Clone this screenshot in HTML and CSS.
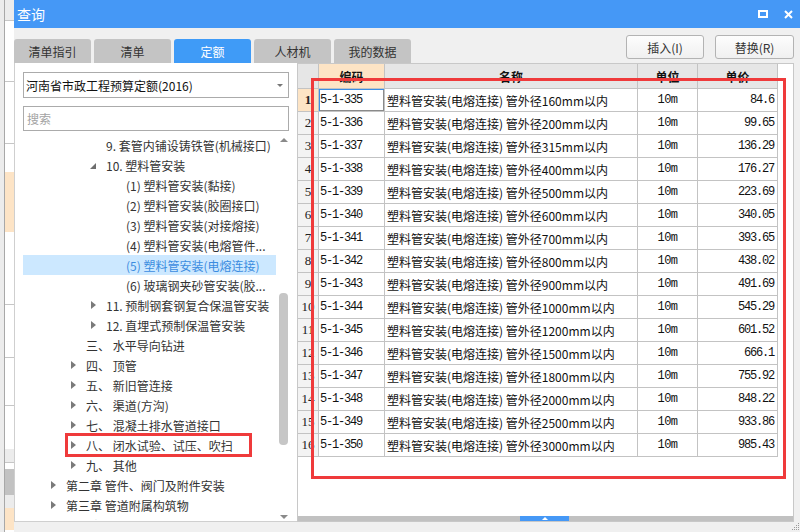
FILE: index.html
```html
<!DOCTYPE html>
<html lang="zh-CN">
<head>
<meta charset="utf-8">
<title>查询</title>
<link rel="stylesheet" href="styles.css">
</head>
<body>
<div class="screen">
  <div class="bgapp">
    <div class="bgapp-col">
      <div class="bg-cell h20 gray"></div>
      <div class="bg-cell h61"></div>
      <div class="bg-cell h62"></div>
      <div class="bg-plain h28"></div>
      <div class="bg-plain h60 orange"></div>
      <div class="bg-cell h73"></div>
      <div class="bg-cell h53"></div>
      <div class="bg-cell h48"></div>
      <div class="bg-plain h43"></div>
      <div class="bg-cell h14 gray"></div>
      <div class="bg-plain h6"></div>
      <div class="bg-plain h26 dark"></div>
      <div class="bg-plain h13 gray"></div>
      <div class="bg-plain h22 orange"></div>
    </div>
  </div>

  <div class="window">
    <div class="titlebar">
      <span class="title">查询</span>
      <div class="controls">
        <span class="max-icon"></span>
        <svg class="close-icon" width="9" height="9" viewBox="0 0 9 9"><path d="M1 1 L8 8 M8 1 L1 8" stroke="#fff" stroke-width="2" fill="none"/></svg>
      </div>
    </div>

    <div class="winbody">
      <div class="toprow">
        <div class="tabs">
          <div class="tab">清单指引</div>
          <div class="tab">清单</div>
          <div class="tab active">定额</div>
          <div class="tab">人材机</div>
          <div class="tab">我的数据</div>
        </div>
        <div class="buttons">
          <div class="btn">插入(I)</div>
          <div class="btn btn-wide">替换(R)</div>
        </div>
      </div>

      <div class="main">
        <div class="left">
          <div class="select">
            <span>河南省市政工程预算定额(2016)</span>
            <span class="caret"></span>
          </div>
          <div class="search">搜索</div>
          <div class="treewrap">
            <div class="tree">
              <div class="row l2"><span class="tw"></span><span>9. 套管内铺设铸铁管(机械接口)</span></div>
              <div class="row l2"><span class="tw"><span class="tri-open"></span></span><span>10. 塑料管安装</span></div>
              <div class="row l3"><span class="tw"></span><span>(1) 塑料管安装(黏接)</span></div>
              <div class="row l3"><span class="tw"></span><span>(2) 塑料管安装(胶圈接口)</span></div>
              <div class="row l3"><span class="tw"></span><span>(3) 塑料管安装(对接熔接)</span></div>
              <div class="row l3"><span class="tw"></span><span>(4) 塑料管安装(电熔管件...</span></div>
              <div class="row l3 selected"><span class="tw"></span><span>(5) 塑料管安装(电熔连接)</span></div>
              <div class="row l3"><span class="tw"></span><span>(6) 玻璃钢夹砂管安装(胶...</span></div>
              <div class="row l2"><span class="tw"><span class="tri"></span></span><span>11. 预制钢套钢复合保温管安装</span></div>
              <div class="row l2"><span class="tw"><span class="tri"></span></span><span>12. 直埋式预制保温管安装</span></div>
              <div class="row l1"><span class="tw"></span><span>三、 水平导向钻进</span></div>
              <div class="row l1"><span class="tw"><span class="tri"></span></span><span>四、 顶管</span></div>
              <div class="row l1"><span class="tw"><span class="tri"></span></span><span>五、 新旧管连接</span></div>
              <div class="row l1"><span class="tw"><span class="tri"></span></span><span>六、 渠道(方沟)</span></div>
              <div class="row l1"><span class="tw"><span class="tri"></span></span><span>七、 混凝土排水管道接口</span></div>
              <div class="row l1 marked"><span class="tw"><span class="tri"></span></span><span>八、 闭水试验、试压、吹扫</span><span class="redmark"></span></div>
              <div class="row l1"><span class="tw"><span class="tri"></span></span><span>九、 其他</span></div>
              <div class="row l0"><span class="tw"><span class="tri"></span></span><span>第二章 管件、阀门及附件安装</span></div>
              <div class="row l0"><span class="tw"><span class="tri"></span></span><span>第三章 管道附属构筑物</span></div>
              <div class="row l0"><span class="tw"><span class="tri"></span></span><span>第四章 措施项目</span></div>
            </div>
            <div class="vscroll">
              <div class="arrow-up"></div>
              <div class="thumb"></div>
              <div class="arrow-down"></div>
            </div>
          </div>
        </div>

        <div class="right">
          <div class="grid">
            <div class="hc"></div>
            <div class="hc hc-sel">编码</div>
            <div class="hc">名称</div>
            <div class="hc">单位</div>
            <div class="hc">单价</div>

            <div class="rn rn-sel">1</div><div class="c code cur">5-1-335</div><div class="c name">塑料管安装(电熔连接) 管外径160mm以内</div><div class="c unit">10m</div><div class="c price">84.6</div>
            <div class="rn">2</div><div class="c code">5-1-336</div><div class="c name">塑料管安装(电熔连接) 管外径200mm以内</div><div class="c unit">10m</div><div class="c price">99.65</div>
            <div class="rn">3</div><div class="c code">5-1-337</div><div class="c name">塑料管安装(电熔连接) 管外径315mm以内</div><div class="c unit">10m</div><div class="c price">136.29</div>
            <div class="rn">4</div><div class="c code">5-1-338</div><div class="c name">塑料管安装(电熔连接) 管外径400mm以内</div><div class="c unit">10m</div><div class="c price">176.27</div>
            <div class="rn">5</div><div class="c code">5-1-339</div><div class="c name">塑料管安装(电熔连接) 管外径500mm以内</div><div class="c unit">10m</div><div class="c price">223.69</div>
            <div class="rn">6</div><div class="c code">5-1-340</div><div class="c name">塑料管安装(电熔连接) 管外径600mm以内</div><div class="c unit">10m</div><div class="c price">340.05</div>
            <div class="rn">7</div><div class="c code">5-1-341</div><div class="c name">塑料管安装(电熔连接) 管外径700mm以内</div><div class="c unit">10m</div><div class="c price">393.65</div>
            <div class="rn">8</div><div class="c code">5-1-342</div><div class="c name">塑料管安装(电熔连接) 管外径800mm以内</div><div class="c unit">10m</div><div class="c price">438.02</div>
            <div class="rn">9</div><div class="c code">5-1-343</div><div class="c name">塑料管安装(电熔连接) 管外径900mm以内</div><div class="c unit">10m</div><div class="c price">491.69</div>
            <div class="rn">10</div><div class="c code">5-1-344</div><div class="c name">塑料管安装(电熔连接) 管外径1000mm以内</div><div class="c unit">10m</div><div class="c price">545.29</div>
            <div class="rn">11</div><div class="c code">5-1-345</div><div class="c name">塑料管安装(电熔连接) 管外径1200mm以内</div><div class="c unit">10m</div><div class="c price">601.52</div>
            <div class="rn">12</div><div class="c code">5-1-346</div><div class="c name">塑料管安装(电熔连接) 管外径1500mm以内</div><div class="c unit">10m</div><div class="c price">666.1</div>
            <div class="rn">13</div><div class="c code">5-1-347</div><div class="c name">塑料管安装(电熔连接) 管外径1800mm以内</div><div class="c unit">10m</div><div class="c price">755.92</div>
            <div class="rn">14</div><div class="c code">5-1-348</div><div class="c name">塑料管安装(电熔连接) 管外径2000mm以内</div><div class="c unit">10m</div><div class="c price">848.22</div>
            <div class="rn">15</div><div class="c code">5-1-349</div><div class="c name">塑料管安装(电熔连接) 管外径2500mm以内</div><div class="c unit">10m</div><div class="c price">933.86</div>
            <div class="rn">16</div><div class="c code">5-1-350</div><div class="c name">塑料管安装(电熔连接) 管外径3000mm以内</div><div class="c unit">10m</div><div class="c price">985.43</div>
          </div>
          <div class="hscroll"><div class="hthumb"><span class="hthumb-arrow"></span></div></div>
          <div class="redbox"></div>
        </div>
      </div>

      <div class="footer">
        <svg class="grip" width="8" height="8" viewBox="0 0 8 8">
          <rect x="6" y="0" width="1" height="1" fill="#9a9a9a"/>
          <rect x="4" y="2" width="1" height="1" fill="#9a9a9a"/>
          <rect x="6" y="2" width="1" height="1" fill="#9a9a9a"/>
          <rect x="2" y="4" width="1" height="1" fill="#9a9a9a"/>
          <rect x="4" y="4" width="1" height="1" fill="#9a9a9a"/>
          <rect x="6" y="4" width="1" height="1" fill="#9a9a9a"/>
          <rect x="0" y="6" width="1" height="1" fill="#9a9a9a"/>
          <rect x="2" y="6" width="1" height="1" fill="#9a9a9a"/>
          <rect x="4" y="6" width="1" height="1" fill="#9a9a9a"/>
          <rect x="6" y="6" width="1" height="1" fill="#9a9a9a"/>
        </svg>
      </div>
    </div>
  </div>
</div>
</body>
</html>
```

FILE: styles.css
```css
* { box-sizing: border-box; margin: 0; padding: 0; }
html, body { width: 800px; height: 532px; overflow: hidden; }
body {
  font-family: "Noto Sans CJK SC", "Microsoft YaHei", sans-serif;
  font-size: 12px;
  color: #333;
  background: #f0f0f0;
}
.screen { display: flex; width: 800px; height: 532px; }

/* background application strip */
.bgapp { width: 14px; flex: none; background: #ececec; padding-left: 4px; }
.bgapp-col { height: 100%; border-left: 1px solid #a8a8a8; background: #fff; display: flex; flex-direction: column; overflow: hidden; }
.bg-cell { flex: none; border-bottom: 1px solid #c6c6c6; }
.bg-plain { flex: none; }
.gray { background: #ececec; }
.dark { background: #c2c2c2; }
.orange { background: #fde4c6; }
.h6 { height: 6px; } .h13 { height: 13px; } .h14 { height: 14px; } .h20 { height: 21px; }
.h22 { height: 22px; } .h26 { height: 26px; } .h28 { height: 28px; } .h43 { height: 43px; }
.h48 { height: 48px; } .h53 { height: 53px; } .h60 { height: 60px; } .h61 { height: 61px; }
.h62 { height: 62px; } .h73 { height: 73px; }

/* window */
.window { width: 786px; flex: none; display: flex; flex-direction: column; }
.titlebar {
  height: 28px; flex: none; background: #4598f6; color: #fff;
  display: flex; align-items: center; justify-content: space-between;
  padding: 0 7px 0 3px;
}
.title { font-size: 14px; }
.controls { display: flex; align-items: center; gap: 16px; }
.max-icon { width: 10px; height: 8px; border: 2px solid #fff; }
.close-icon { display: block; }

.winbody { flex: 1; display: flex; flex-direction: column; padding-right: 6px; }
.toprow { height: 35px; flex: none; display: flex; justify-content: space-between; }
.tabs { display: flex; gap: 3px; align-self: flex-end; }
.tab {
  width: 77px; height: 24px; background: #c4c4c4; border-radius: 3px 3px 0 0;
  display: flex; align-items: center; justify-content: center; color: #333;
}
.tab.active { background: #3f9bf7; color: #fff; }
.buttons { display: flex; gap: 11px; padding-top: 7px; }
.btn {
  width: 78px; height: 24px; border: 1px solid #b3b3b3; border-radius: 3px;
  background: linear-gradient(#fdfdfd, #f0f0f0);
  display: flex; align-items: center; justify-content: center; color: #333;
}
.btn-wide { width: 79px; }

.main { height: 459px; flex: none; display: flex; }

/* left panel */
.left {
  width: 283px; flex: none; background: #fff;
  border-left: 1px solid #cfcfcf; border-bottom: 1px solid #cfcfcf;
  padding: 9px 8px 0 8px; display: flex; flex-direction: column;
}
.select {
  height: 26px; border: 1px solid #ababab; color: #111;
  display: flex; align-items: center; justify-content: space-between;
  padding: 0 5px 0 2px;
}
.caret { width: 0; height: 0; border-left: 3px solid transparent; border-right: 3px solid transparent; border-top: 3px solid #777; }
.search {
  height: 25px; margin-top: 8px; border: 1px solid #ababab; color: #a3a3a3;
  display: flex; align-items: center; padding-left: 3px;
}
.treewrap { margin-top: 4px; height: 385px; display: flex; overflow: hidden; }
.tree { width: 253px; flex: none; overflow: hidden; }
.row { height: 20px; display: flex; align-items: center; white-space: nowrap; color: #333; position: relative; }
.row.l0 { padding-left: 28px; }
.row.l1 { padding-left: 48px; }
.row.l2 { padding-left: 68px; }
.row.l3 { padding-left: 88px; }
.row.selected { background: #cce8ff; color: #3b8ce0; }
.tw { width: 15px; flex: none; display: flex; align-items: center; }
.tri { width: 0; height: 0; border-left: 5px solid #7a7a7a; border-top: 4px solid transparent; border-bottom: 4px solid transparent; }
.tri-open { width: 0; height: 0; border-bottom: 6px solid #6e6e6e; border-left: 6px solid transparent; margin-left: -1px; margin-top: 2px; }
.redmark {
  position: absolute; left: 42px; top: -2px; width: 187px; height: 24px;
  border: 3px solid #ef3a3b;
}
.vscroll { width: 11px; margin-left: 2px; flex: none; display: flex; flex-direction: column; align-items: center; }
.arrow-up { margin-top: 3px; width: 0; height: 0; border-left: 4px solid transparent; border-right: 4px solid transparent; border-bottom: 4px solid #8a8a8a; }
.thumb { margin-top: 151px; width: 9px; height: 152px; background: #c6c6c6; border-radius: 4px; }
.arrow-down { margin-top: auto; margin-bottom: 1px; width: 0; height: 0; border-left: 4px solid transparent; border-right: 4px solid transparent; border-top: 4px solid #8a8a8a; }

/* right panel */
.right {
  width: 497px; flex: none; background: #fff; border: 1px solid #c8c8c8;
  display: flex; flex-direction: column; position: relative;
}
.grid {
  display: grid;
  grid-template-columns: 21px 66px 253px 60px 80px;
  grid-template-rows: 25px repeat(16, 23px);
  width: 480px;
  font-size: 12px; color: #111;
}
.grid > div { border-right: 1px solid #c3c3c3; border-bottom: 1px solid #c3c3c3; overflow: hidden; white-space: nowrap; display: flex; align-items: center; }
.hc { background: #e6e6e6; justify-content: center; font-weight: bold; color: #111; }
.hc-sel { background: #fde4c5; }
.rn { background: #f3f3f3; justify-content: center; font-family: "Liberation Serif", serif; font-size: 13px; color: #222; }
.rn-sel { background: #fde4c5; font-weight: bold; }
.c { background: #fff; }
.code { padding-left: 1px; font-family: "Liberation Mono", monospace; font-size: 12px; letter-spacing: -1.2px; }
.cur { box-shadow: inset 1px 1px 0 #3a8ee6, inset -1px -1px 0 #8a8a8a; }
.name { padding-left: 2px; }
.unit { justify-content: center; font-family: "Liberation Mono", monospace; font-size: 12px; letter-spacing: -0.6px; }
.price { justify-content: flex-end; padding-right: 3px; font-family: "Liberation Mono", monospace; font-size: 12px; letter-spacing: -1.2px; }

.hscroll { margin-top: auto; height: 5px; background: #c1c1c1; display: flex; }
.hthumb { margin-left: 222px; width: 49px; height: 5px; background: #4598f6; display: flex; justify-content: center; align-items: flex-end; }
.hthumb-arrow { width: 0; height: 0; border-left: 3px solid transparent; border-right: 3px solid transparent; border-bottom: 3px solid #fff; margin-bottom: 1px; }

.redbox {
  position: absolute; left: 13px; top: 14px; width: 475px; height: 401px;
  border: 3px solid #ef3a3b;
}

.footer { flex: 1; display: flex; justify-content: flex-end; align-items: flex-end; margin-right: -6px; padding-bottom: 1px; }
.grip { display: block; }
```
